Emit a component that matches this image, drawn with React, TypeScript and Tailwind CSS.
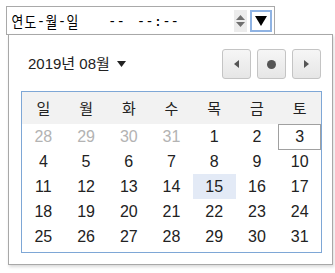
import React from "react";

const font = { fontFamily: '"Liberation Sans", "Noto Sans CJK KR", sans-serif' };
const kr = { fontFamily: '"Noto Sans CJK KR", sans-serif' };
const mono = { fontFamily: '"DejaVu Sans Mono", monospace' };

function NavBtn({ children }: { children: React.ReactNode }) {
  return (
    <div className="w-[29px] h-[30px] rounded-[3px] border border-[#c4c4c4] bg-gradient-to-b from-[#f6f6f6] to-[#e6e6e6] flex items-center justify-center">
      {children}
    </div>
  );
}

function K({ c }: { c: string }) {
  return (
    <span className="w-[13px] flex justify-center overflow-visible">
      <span className="inline-block text-[16px] scale-x-[0.8] leading-none" style={kr}>{c}</span>
    </span>
  );
}
function D() {
  return (
    <span className="w-[8px] flex justify-center text-[14px] leading-none" style={mono}>-</span>
  );
}

export default function App() {
  const heads = ["일", "월", "화", "수", "목", "금", "토"];
  const weeks: (number | string)[][] = [
    [28, 29, 30, 31, 1, 2, 3],
    [4, 5, 6, 7, 8, 9, 10],
    [11, 12, 13, 14, 15, 16, 17],
    [18, 19, 20, 21, 22, 23, 24],
    [25, 26, 27, 28, 29, 30, 31],
  ];
  return (
    <div className="w-[335px] h-[273px] bg-white relative pt-[6px] pl-[6px]" style={font}>
      <div className="w-[269px] h-[29px] border border-[#a9a9a9] flex items-center pl-[4px] pr-[2px]">
        <div className="flex items-center text-black whitespace-pre">
          <K c="연" />
          <K c="도" />
          <D />
          <K c="월" />
          <D />
          <K c="일" />
          <span className="ml-[29px] text-[14px] leading-none" style={mono}>--</span>
          <span className="ml-[12px] text-[14px] leading-none" style={mono}>--:--</span>
        </div>
        <div className="ml-auto flex items-center h-full">
          <div className="w-[13px] h-[22px] bg-[#ececec] flex flex-col items-center justify-center gap-[2px]">
            <svg width="9" height="5" viewBox="0 0 9 5"><path d="M0 5 L4.5 0 L9 5Z" fill="#707070" /></svg>
            <svg width="9" height="5" viewBox="0 0 9 5"><path d="M0 0 L4.5 5 L9 0Z" fill="#707070" /></svg>
          </div>
          <div className="ml-[3px] w-[22px] h-[22px] border-2 border-[#8fb3e3] flex items-center justify-center">
            <svg width="12" height="10" viewBox="0 0 12 10"><path d="M0 0 L12 0 L6 10Z" fill="#000" /></svg>
          </div>
        </div>
      </div>
      <div className="absolute left-[8px] top-[34px] w-[325px] h-[231px] border border-[#a8a8a8] bg-white shadow-[1px_2px_3px_rgba(0,0,0,0.15)] pl-[12px] pr-[11px]">
        <div className="flex items-center h-[56px] pt-[2px]">
          <span className="ml-[7px] text-[15px] text-[#222]">2019년 08월</span>
          <svg className="ml-[7px]" width="9" height="6" viewBox="0 0 9 6"><path d="M0 0 L9 0 L4.5 6Z" fill="#222" /></svg>
          <div className="ml-auto flex gap-[6px]">
            <NavBtn>
              <svg width="5" height="8" viewBox="0 0 5 8"><path d="M5 0 L0 4 L5 8Z" fill="#555" /></svg>
            </NavBtn>
            <NavBtn>
              <div className="w-[9px] h-[9px] rounded-full bg-[#555]" />
            </NavBtn>
            <NavBtn>
              <svg width="5" height="8" viewBox="0 0 5 8"><path d="M0 0 L5 4 L0 8Z" fill="#555" /></svg>
            </NavBtn>
          </div>
        </div>
        <div className="w-[301px] border border-[#7ea7d6]">
          <div className="grid grid-cols-7 h-[32px] bg-[#f2f2f2] items-center">
            {heads.map((h) => (
              <div key={h} className="text-center text-[15px] text-[#222]" style={kr}>{h}</div>
            ))}
          </div>
          <div className="pb-[3px]">
            {weeks.map((w, wi) => (
              <div key={wi} className="grid grid-cols-7 h-[25px]">
                {w.map((d, di) => {
                  const muted = wi === 0 && di < 4;
                  const sel = wi === 0 && di === 6;
                  const hl = wi === 2 && di === 4;
                  return (
                    <div
                      key={di}
                      className={
                        "flex items-center justify-center text-[16px] " +
                        (muted ? "text-[#b3b3b3] " : "text-[#222] ") +
                        (sel ? "border border-[#a0a0a0] " : "") +
                        (hl ? "bg-[#e3eaf6] " : "")
                      }
                    >
                      {d}
                    </div>
                  );
                })}
              </div>
            ))}
          </div>
        </div>
      </div>
    </div>
  );
}
